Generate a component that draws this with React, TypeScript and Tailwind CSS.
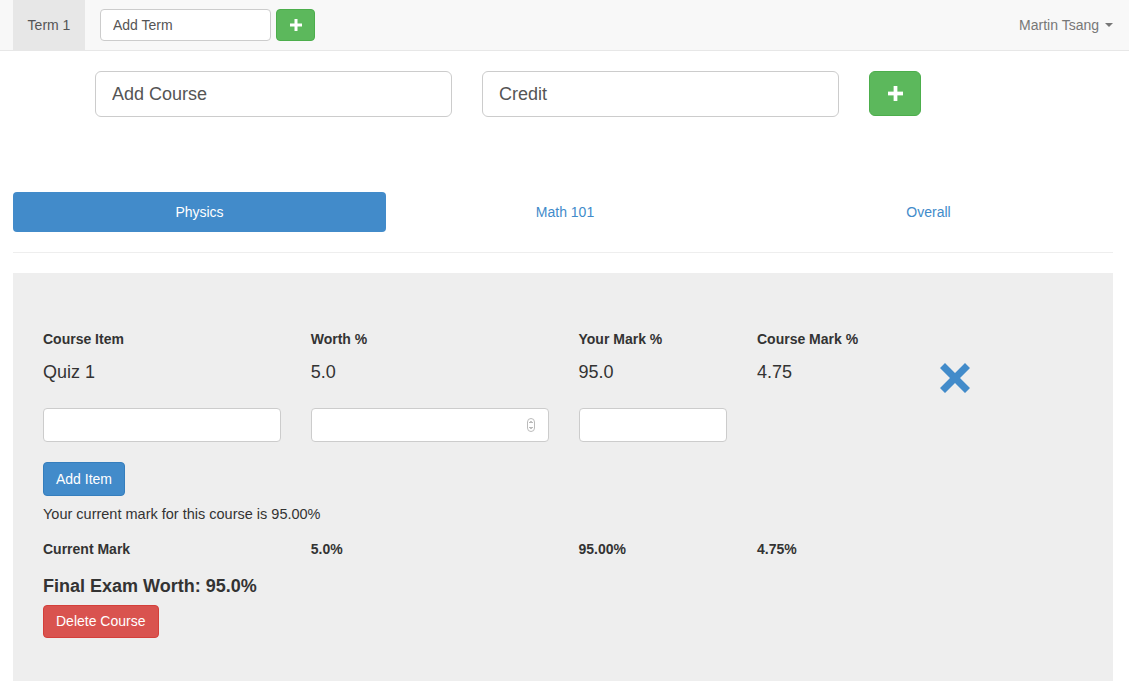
import { useState } from "react";

interface Item {
  name: string;
  worth: string;
  mark: string;
  courseMark: string;
}

const PlusIcon = ({ size = 12 }: { size?: number }) => (
  <svg width={size} height={size} viewBox="0 0 12 12" fill="white">
    <rect x="4.5" y="0" width="3" height="12" />
    <rect x="0" y="4.5" width="12" height="3" />
  </svg>
);

const RemoveIcon = () => (
  <svg width="32" height="32" viewBox="0 0 32 32" fill="#428bca">
    <path d="M6 1 L16 11 L26 1 L31 6 L21 16 L31 26 L26 31 L16 21 L6 31 L1 26 L11 16 L1 6 Z" />
  </svg>
);

const App = () => {
  const [tab, setTab] = useState("Physics");
  const [items] = useState<Item[]>([
    { name: "Quiz 1", worth: "5.0", mark: "95.0", courseMark: "4.75" },
  ]);

  const tabs = [
    { label: "Physics", w: "w-[373px]" },
    { label: "Math 101", w: "w-[358px]" },
    { label: "Overall", w: "flex-1" },
  ];

  return (
    <div className="min-h-screen bg-white text-[14px] text-[#333] font-['Liberation_Sans',Arial,sans-serif]">
      {/* Navbar */}
      <nav className="h-[51px] bg-[#f8f8f8] border-b border-[#e7e7e7]">
        <div className="w-[1100px] ml-[13px] h-[50px] flex items-center">
          <div className="h-[50px] w-[72px] bg-[#e7e7e7] text-[#555] flex items-center justify-center">
            Term 1
          </div>
          <input
            placeholder="Add Term"
            className="ml-[15px] w-[171px] h-[32px] px-3 bg-white border border-[#ccc] rounded-[4px] text-[14px] placeholder:text-[#555] outline-none"
          />
          <button className="ml-[5px] w-[39px] h-[32px] bg-[#5cb85c] border border-[#4cae4c] rounded-[4px] flex items-center justify-center">
            <PlusIcon size={12} />
          </button>
          <div className="ml-auto flex items-center gap-[6px] text-[#777]">
            <span>Martin Tsang</span>
            <span className="w-0 h-0 border-l-[4px] border-r-[4px] border-t-[4px] border-l-transparent border-r-transparent border-t-[#777]" />
          </div>
        </div>
      </nav>

      {/* Add course */}
      <div className="flex mt-[20px] ml-[95px]">
        <input
          placeholder="Add Course"
          className="w-[357px] h-[46px] px-4 border border-[#ccc] rounded-[6px] text-[18px] placeholder:text-[#555] outline-none"
        />
        <input
          placeholder="Credit"
          className="ml-[30px] w-[357px] h-[46px] px-4 border border-[#ccc] rounded-[6px] text-[18px] placeholder:text-[#555] outline-none"
        />
        <button className="ml-[30px] w-[52px] h-[45px] bg-[#5cb85c] border border-[#4cae4c] rounded-[6px] flex items-center justify-center">
          <PlusIcon size={15} />
        </button>
      </div>

      {/* Course tabs */}
      <div className="w-[1100px] ml-[13px] mt-[75px] flex">
        {tabs.map((t) => (
          <button
            key={t.label}
            onClick={() => setTab(t.label)}
            className={`${t.w} h-[40px] rounded-[4px] flex items-center justify-center ${
              tab === t.label ? "bg-[#428bca] text-white" : "text-[#428bca]"
            }`}
          >
            {t.label}
          </button>
        ))}
      </div>
      <div className="w-[1100px] ml-[13px] mt-[20px] border-t border-[#eee]" />

      {/* Course panel */}
      <div className="w-[1100px] ml-[13px] mt-[20px] bg-[#eee] px-[30px] pt-[56px] pb-[50px]">
        <div className="grid grid-cols-12 gap-x-[30px] w-[1041px]">
          <div className="col-span-3 font-bold leading-[20px]">Course Item</div>
          <div className="col-span-3 font-bold leading-[20px]">Worth %</div>
          <div className="col-span-2 font-bold leading-[20px]">Your Mark %</div>
          <div className="col-span-2 font-bold leading-[20px]">Course Mark %</div>
          <div className="col-span-2" />

          {items.map((it) => (
            <div key={it.name} className="col-span-12 grid grid-cols-12 gap-x-[30px] mt-[12px]">
              <div className="col-span-3 text-[18px] leading-[22px]">{it.name}</div>
              <div className="col-span-3 text-[18px] leading-[22px]">{it.worth}</div>
              <div className="col-span-2 text-[18px] leading-[22px]">{it.mark}</div>
              <div className="col-span-2 text-[18px] leading-[22px]">{it.courseMark}</div>
              <div className="col-span-2 pl-[3px] pt-[1px]">
                <RemoveIcon />
              </div>
            </div>
          ))}

          <div className="col-span-3 mt-[14px]">
            <input className="w-full h-[34px] bg-white border border-[#ccc] rounded-[4px] outline-none" />
          </div>
          <div className="col-span-3 mt-[14px] relative">
            <input className="w-full h-[34px] bg-white border border-[#ccc] rounded-[4px] outline-none" />
            <svg
              className="absolute right-[14px] top-[10px]"
              width="8"
              height="14"
              viewBox="0 0 8 14"
              fill="none"
              stroke="#777"
              strokeWidth="1"
            >
              <rect x="0.5" y="0.5" width="7" height="13" rx="3.5" stroke="#bbb" />
              <path d="M2.5 5 L4 3.5 L5.5 5" />
              <path d="M2.5 9 L4 10.5 L5.5 9" />
            </svg>
          </div>
          <div className="col-span-2 mt-[14px]">
            <input className="w-full h-[34px] bg-white border border-[#ccc] rounded-[4px] outline-none" />
          </div>
        </div>

        <button className="mt-[20px] h-[34px] px-[12px] bg-[#428bca] border border-[#357ebd] rounded-[4px] text-white">
          Add Item
        </button>
        <p className="mt-[8px] leading-[20px] text-[14.5px]">Your current mark for this course is 95.00%</p>

        <div className="grid grid-cols-12 gap-x-[30px] w-[1041px] mt-[15px] font-bold leading-[20px]">
          <div className="col-span-3">Current Mark</div>
          <div className="col-span-3">5.0%</div>
          <div className="col-span-2">95.00%</div>
          <div className="col-span-2">4.75%</div>
        </div>

        <h4 className="mt-[16px] text-[18px] font-bold leading-[22px]">Final Exam Worth: 95.0%</h4>
        <button className="mt-[8px] h-[33px] px-[12px] bg-[#d9534f] border border-[#d43f3a] rounded-[4px] text-white">
          Delete Course
        </button>
      </div>
    </div>
  );
};

export default App;
